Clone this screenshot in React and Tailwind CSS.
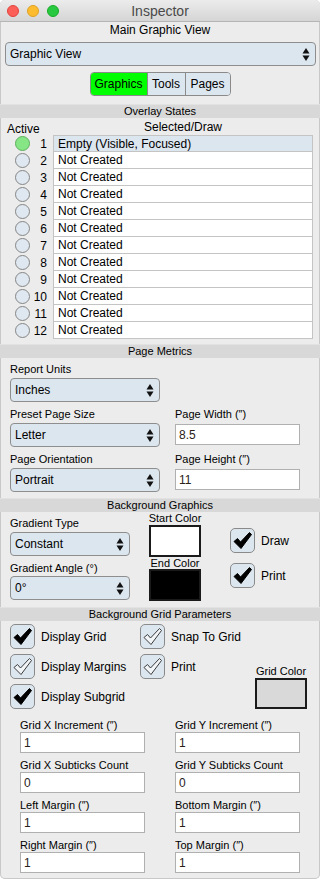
import React from "react";

const FONT = "font-['Liberation_Sans',Arial,Helvetica,sans-serif]";

function Arrows() {
  return (
    <svg width="8" height="15" viewBox="0 0 8 15" className="shrink-0">
      <polygon points="4,1 0.5,6.5 7.5,6.5" fill="#111" />
      <polygon points="0.5,8.5 7.5,8.5 4,14" fill="#111" />
    </svg>
  );
}

function Popup({ label, className = "" }) {
  return (
    <div
      className={`flex items-center justify-between h-[24px] rounded-[4px] border border-[#8e8e8e] bg-[#dce6ef] pl-[4px] pr-[5px] text-[12px] leading-[14px] text-black ${className}`}
    >
      <span>{label}</span>
      <Arrows />
    </div>
  );
}

function Tick({ hollow }) {
  return (
    <svg width="23" height="23" viewBox="0 0 23 23">
      <path
        d="M3 12.5 L6.5 9.5 L9.5 13 L18.5 3.5 L20.5 5.5 L10 19.5 Z"
        fill={hollow ? "#f2f5f8" : "#000"}
        stroke={hollow ? "#3a3a3a" : "#000"}
        strokeWidth={hollow ? "1" : "1"}
        strokeLinejoin="round"
      />
    </svg>
  );
}

function Check({ hollow, label, labelClass = "ml-[6px]" }) {
  return (
    <div className="flex items-center">
      <div className="w-[25px] h-[25px] rounded-[5px] border border-[#8a8a8a] bg-[#dce6ef] flex items-center justify-center shrink-0">
        <Tick hollow={hollow} />
      </div>
      {label && <span className={`text-[12px] leading-[14px] ${labelClass}`}>{label}</span>}
    </div>
  );
}

function Field({ label, value, className = "" }) {
  return (
    <div className={`flex flex-col w-[125px] ${className}`}>
      <span className="text-[11px] leading-[14px]">{label}</span>
      <div className="h-[21px] border border-[#b0b0b0] bg-white text-[12px] leading-[14px] pl-[3px] pt-[3px] text-[#2a2119]">
        {value}
      </div>
    </div>
  );
}

function Header({ title, className = "" }) {
  return (
    <div
      className={`h-[14px] bg-[#d8d8d8] border-t border-[#e2e2e2] text-center text-[11px] leading-[13px] text-black ${className}`}
    >
      {title}
    </div>
  );
}

function Radio({ active }) {
  return active ? (
    <div className="w-[15px] h-[15px] rounded-full border border-[#5fae5f] bg-[#86e686]" />
  ) : (
    <div className="w-[15px] h-[15px] rounded-full border border-[#858585] bg-[#dfe8f0]" />
  );
}

export default function App() {
  const rows = [
    "Empty (Visible, Focused)",
    "Not Created",
    "Not Created",
    "Not Created",
    "Not Created",
    "Not Created",
    "Not Created",
    "Not Created",
    "Not Created",
    "Not Created",
    "Not Created",
    "Not Created",
  ];

  return (
    <div
      className={`${FONT} w-[320px] h-[879px] bg-[#ececec] rounded-[5px] overflow-hidden flex flex-col text-black shadow-[inset_0_0_0_1px_#c8c8c8]`}
    >
      {/* Title bar */}
      <div className="h-[22px] shrink-0 bg-gradient-to-b from-[#ececec] to-[#d5d5d5] border-b border-[#b5b5b5] grid grid-cols-[1fr_auto_1fr] items-center">
        <div className="flex items-center gap-[8px] pl-[7px]">
          <div className="w-[12px] h-[12px] rounded-full bg-[#fc5f57] border border-[#e0443e]" />
          <div className="w-[12px] h-[12px] rounded-full bg-[#fdbc2e] border border-[#dea123]" />
          <div className="w-[12px] h-[12px] rounded-full bg-[#28c840] border border-[#1aab29]" />
        </div>
        <div className="text-[14px] leading-[16px] text-[#4a4a4a]">Inspector</div>
        <div />
      </div>

      <div className="mt-[1px] text-center text-[12px] leading-[14px]">Main Graphic View</div>
      <Popup label="Graphic View" className="mt-[5px] ml-[5px] mr-[4px]" />

      {/* Segmented control */}
      <div className="mt-[6px] self-center flex h-[24px] rounded-[4px] border border-[#8a8a8a] overflow-hidden text-[12px] leading-[14px]">
        <div className="w-[57px] bg-[#00ff00] border-r border-[#8a8a8a] flex items-center justify-center">Graphics</div>
        <div className="w-[38px] bg-[#dce6ef] border-r border-[#8a8a8a] flex items-center justify-center">Tools</div>
        <div className="w-[44px] bg-[#dce6ef] flex items-center justify-center">Pages</div>
      </div>

      {/* Overlay states */}
      <Header title="Overlay States" className="mt-[8px]" />
      <div className="h-[17px] flex">
        <span className="w-[53px] pl-[7px] mt-[4px] text-[12px] leading-[14px]">Active</span>
        <span className="flex-1 mr-[7px] mt-[2px] text-center text-[12px] leading-[14px]">Selected/Draw</span>
      </div>
      <div className="flex flex-col">
        {rows.map((r, i) => (
          <div key={i} className="flex h-[17px]">
            <div className="w-[53px] flex items-center">
              <div className="ml-[15px]">
                <Radio active={i === 0} />
              </div>
              <span className="flex-1 text-right pr-[6px] text-[12px] leading-[14px]">{i + 1}</span>
            </div>
            <div
              className={`flex-1 mr-[7px] border-x border-b border-[#c4c4c4] ${i === 0 ? "border-t bg-[#dce6ef]" : "bg-white"} flex items-center pl-[4px] text-[12px] leading-[14px]`}
            >
              {r}
            </div>
          </div>
        ))}
      </div>

      {/* Page metrics */}
      <Header title="Page Metrics" className="mt-[5px]" />
      <div className="flex flex-col pl-[10px]">
        <span className="mt-[4px] text-[11px] leading-[14px]">Report Units</span>
        <Popup label="Inches" className="mt-[2px] w-[150px]" />
        <div className="flex mt-[5px]">
          <div className="flex flex-col w-[150px]">
            <span className="text-[11px] leading-[14px]">Preset Page Size</span>
            <Popup label="Letter" className="mt-[2px]" />
          </div>
          <Field label={"Page Width (\u2033)"} value="8.5" className="ml-[15px] [&>div]:mt-[3px]" />
        </div>
        <div className="flex mt-[5px]">
          <div className="flex flex-col w-[150px]">
            <span className="text-[11px] leading-[14px]">Page Orientation</span>
            <Popup label="Portrait" className="mt-[2px]" />
          </div>
          <Field label={"Page Height (\u2033)"} value="11" className="ml-[15px] [&>div]:mt-[3px]" />
        </div>
      </div>

      {/* Background graphics */}
      <Header title="Background Graphics" className="mt-[6px]" />
      <div className="flex">
        <div className="flex flex-col w-[120px] ml-[10px]">
          <span className="mt-[4px] text-[11px] leading-[14px]">Gradient Type</span>
          <Popup label="Constant" className="mt-[2px]" />
          <span className="mt-[5px] text-[11px] leading-[14px]">Gradient Angle (°)</span>
          <Popup label="0°" className="mt-[1px]" />
        </div>
        <div className="flex flex-col w-[52px] ml-[19px] items-center">
          <span className="text-[11px] leading-[12px] whitespace-nowrap">Start Color</span>
          <div className="mt-[1px] w-[52px] h-[32px] border-2 border-[#1a1a1a] bg-white" />
          <span className="text-[11px] leading-[12px] whitespace-nowrap">End Color</span>
          <div className="w-[52px] h-[32px] border-2 border-[#1a1a1a] bg-black" />
        </div>
        <div className="flex flex-col ml-[29px] pt-[16px]">
          <Check label="Draw" />
          <div className="mt-[10px]">
            <Check label="Print" />
          </div>
        </div>
      </div>

      {/* Background grid parameters */}
      <Header title="Background Grid Parameters" className="mt-[6px]" />
      <div className="flex mt-[3px]">
        <div className="flex flex-col gap-[5px] w-[130px] ml-[10px]">
          <Check label="Display Grid" />
          <Check hollow label="Display Margins" />
          <Check label="Display Subgrid" />
        </div>
        <div className="flex flex-col gap-[5px] w-[115px]">
          <Check hollow label="Snap To Grid" />
          <Check hollow label="Print" />
        </div>
        <div className="flex flex-col pt-[40px] w-[52px] items-center">
          <span className="text-[11px] leading-[14px] whitespace-nowrap">Grid Color</span>
          <div className="w-[52px] h-[31px] border-2 border-[#1a1a1a] bg-[#d9d9d9]" />
        </div>
      </div>

      <div className="grid grid-cols-[125px_125px] gap-x-[30px] gap-y-[5px] ml-[20px] mt-[9px]">
        <Field label={"Grid X Increment (\u2033)"} value="1" />
        <Field label={"Grid Y Increment (\u2033)"} value="1" />
        <Field label="Grid X Subticks Count" value="0" />
        <Field label="Grid Y Subticks Count" value="0" />
        <Field label={"Left Margin (\u2033)"} value="1" />
        <Field label={"Bottom Margin (\u2033)"} value="1" />
        <Field label={"Right Margin (\u2033)"} value="1" />
        <Field label={"Top Margin (\u2033)"} value="1" />
      </div>
    </div>
  );
}
